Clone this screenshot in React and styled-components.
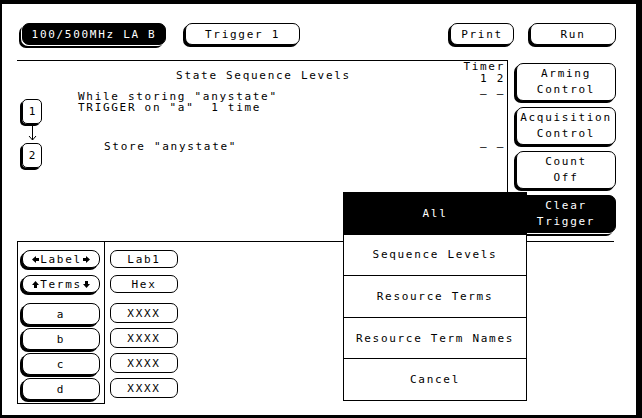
import React from 'react';
import styled, { createGlobalStyle } from 'styled-components';

const Global = createGlobalStyle`
  html, body { margin: 0; padding: 0; background: #000; }
  body { font-family: "DejaVu Sans Mono", "Liberation Mono", monospace; }
`;

const Frame = styled.div`
  width: 642px;
  height: 418px;
  box-sizing: border-box;
  background: #000;
  padding: 4px 6px 3px 2px;
`;

const Screen = styled.div`
  position: relative;
  width: 100%;
  height: 100%;
  box-sizing: border-box;
  background: #fff;
  color: #000;
  font-size: 11px;
  letter-spacing: 1.7px;
  line-height: 11px;
  padding: 19px 20px 0 15px;
  display: flex;
  flex-direction: column;
`;

const TopBar = styled.div`
  display: flex;
  align-items: center;
  height: 22px;
`;

const Spacer = styled.div`
  flex: 1;
`;

const Btn = styled.div`
  box-sizing: border-box;
  display: flex;
  flex-direction: column;
  align-items: center;
  justify-content: center;
  flex: none;
  width: ${p => p.$w}px;
  height: ${p => p.$h}px;
  margin-left: ${p => p.$ml || 0}px;
  border: 1px solid #000;
  border-radius: ${p => p.$r || 7}px;
  background: ${p => (p.$dark ? '#000' : '#fff')};
  color: ${p => (p.$dark ? '#fff' : '#000')};
  box-shadow: ${p => (p.$dark ? '-1px 1px 0 #fff, -3px 3px 0 #000' : p.$flat ? 'none' : '-2px 2px 0 #000')};
  line-height: ${p => p.$lh || 11}px;
  white-space: pre;
  text-align: center;
`;

const Mid = styled.div`
  display: flex;
  margin-top: 15px;
  height: 181px;
`;

const Panel = styled.div`
  width: 492px;
  box-sizing: border-box;
  border-top: 1px solid #000;
  border-right: 1px solid #000;
  padding: 0 2px 0 5px;
  display: grid;
  grid-template-columns: 1fr auto;
  grid-template-rows: auto 1fr;
`;

const Title = styled.div`
  grid-column: 1 / -1;
  grid-row: 1;
  justify-self: center;
  margin-top: 9px;
`;

const TimerCol = styled.div`
  grid-column: 2;
  grid-row: 1 / span 2;
  display: flex;
  flex-direction: column;
  align-items: flex-end;
  margin-top: 0;
  line-height: 12px;
`;

const TimerLine = styled.div`
  margin-top: ${p => p.$mt || 0}px;
  white-space: pre;
`;

const Flow = styled.div`
  grid-column: 1;
  grid-row: 2;
  display: flex;
  flex-direction: column;
  margin-top: 10px;
`;

const Level = styled.div`
  display: flex;
  align-items: flex-start;
`;

const LevelBox = styled.div`
  box-sizing: border-box;
  width: 20px;
  height: 25px;
  margin-top: ${p => p.$mt || 0}px;
  border: 1px solid #000;
  border-radius: 5px;
  box-shadow: -2px 2px 0 #000;
  display: flex;
  align-items: center;
  justify-content: center;
  letter-spacing: 0;
`;

const LevelText = styled.div`
  margin-left: ${p => p.$ml}px;
  white-space: pre;
`;

const Connector = styled.svg`
  display: block;
  margin-left: 5px;
`;

const RightCol = styled.div`
  display: flex;
  flex-direction: column;
  gap: 6px;
  padding: 3px 0 0 8px;
`;

const Bottom = styled.div`
  display: flex;
  width: 597px;
  border-top: 1px solid #000;
`;

const LeftBox = styled.div`
  box-sizing: border-box;
  width: 88px;
  height: 162px;
  border: 1px solid #000;
  border-top: none;
  padding: 8px 0 0 4px;
  display: flex;
  flex-direction: column;
`;

const ValueCol = styled.div`
  display: flex;
  flex-direction: column;
  padding: 8px 0 0 5px;
`;

const Group = styled.div`
  display: flex;
  flex-direction: column;
  gap: ${p => p.$gap}px;
  margin-top: ${p => p.$mt || 0}px;
`;

const Menu = styled.div`
  position: absolute;
  left: 341px;
  top: 188px;
  width: 184px;
  height: 209px;
  box-sizing: border-box;
  border: 1px solid #000;
  background: #fff;
  display: flex;
  flex-direction: column;
`;

const MenuItem = styled.div`
  flex: 1;
  display: flex;
  align-items: center;
  justify-content: center;
  background: ${p => (p.$active ? '#000' : '#fff')};
  color: ${p => (p.$active ? '#fff' : '#000')};
  border-top: ${p => (p.$first ? 'none' : '1px solid #000')};
`;

const Glyph = styled.svg`
  display: block;
  margin: 0 1px;
`;

const Row = styled.span`
  display: flex;
  align-items: center;
`;

function Arrow({ dir }) {
  const pts = {
    left: '0,3.5 4,0 4,2 7,2 7,5 4,5 4,7',
    right: '7,3.5 3,0 3,2 0,2 0,5 3,5 3,7',
    up: '3.5,0 7,4 5,4 5,7 2,7 2,4 0,4',
    down: '3.5,7 7,3 5,3 5,0 2,0 2,3 0,3',
  }[dir];
  return (
    <Glyph width="7" height="7" viewBox="0 0 7 7">
      <polygon points={pts} fill="#000" />
    </Glyph>
  );
}

export default function App() {
  return (
    <>
      <Global />
      <Frame>
        <Screen>
          <TopBar>
            <Btn $dark $w={144} $h={22} $ml={5}>100/500MHz LA B</Btn>
            <Btn $w={115} $h={22} $ml={19}>Trigger 1</Btn>
            <Spacer />
            <Btn $w={64} $h={22}>Print</Btn>
            <Btn $w={86} $h={22} $ml={16}>Run</Btn>
          </TopBar>

          <Mid>
            <Panel>
              <Title>State Sequence Levels</Title>
              <TimerCol>
                <TimerLine>Timer</TimerLine>
                <TimerLine>1 2</TimerLine>
                <TimerLine $mt={3}>– –</TimerLine>
                <TimerLine $mt={41}>– –</TimerLine>
              </TimerCol>
              <Flow>
                <Level>
                  <LevelBox $mt={8}>1</LevelBox>
                  <LevelText $ml={36}>{'While storing "anystate"\nTRIGGER on "a"  1 time'}</LevelText>
                </Level>
                <Connector width="10" height="17" viewBox="0 0 10 17">
                  <line x1="5.5" y1="0" x2="5.5" y2="16" stroke="#000" strokeWidth="1" />
                  <polyline points="2,12 5.5,16 9,12" fill="none" stroke="#000" strokeWidth="1" />
                </Connector>
                <Level>
                  <LevelBox $mt={2}>2</LevelBox>
                  <LevelText $ml={62}>{'Store "anystate"'}</LevelText>
                </Level>
              </Flow>
            </Panel>
            <RightCol>
              <Btn $w={100} $h={38} $lh={16}>{'Arming\nControl'}</Btn>
              <Btn $w={100} $h={38} $lh={16}>{'Acquisition\nControl'}</Btn>
              <Btn $w={100} $h={38} $lh={16}>{'Count\nOff'}</Btn>
              <Btn $dark $w={100} $h={38} $lh={16}>{'Clear\nTrigger'}</Btn>
            </RightCol>
          </Mid>

          <Bottom>
            <LeftBox>
              <Group $gap={7}>
                <Btn $w={78} $h={18} $r={8}>
                  <Row><Arrow dir="left" />Label<Arrow dir="right" /></Row>
                </Btn>
                <Btn $w={78} $h={18} $r={8}>
                  <Row><Arrow dir="up" />Terms<Arrow dir="down" /></Row>
                </Btn>
              </Group>
              <Group $gap={3} $mt={10}>
                <Btn $w={78} $h={22} $r={8}>a</Btn>
                <Btn $w={78} $h={22} $r={8}>b</Btn>
                <Btn $w={78} $h={22} $r={8}>c</Btn>
                <Btn $w={78} $h={22} $r={8}>d</Btn>
              </Group>
            </LeftBox>
            <ValueCol>
              <Group $gap={7}>
                <Btn $flat $w={68} $h={18} $r={7}>Lab1</Btn>
                <Btn $flat $w={68} $h={18} $r={7}>Hex</Btn>
              </Group>
              <Group $gap={5} $mt={10}>
                <Btn $flat $w={68} $h={20} $r={7}>XXXX</Btn>
                <Btn $flat $w={68} $h={20} $r={7}>XXXX</Btn>
                <Btn $flat $w={68} $h={20} $r={7}>XXXX</Btn>
                <Btn $flat $w={68} $h={20} $r={7}>XXXX</Btn>
              </Group>
            </ValueCol>
          </Bottom>

          <Menu>
            <MenuItem $active $first>All</MenuItem>
            <MenuItem>Sequence Levels</MenuItem>
            <MenuItem>Resource Terms</MenuItem>
            <MenuItem>Resource Term Names</MenuItem>
            <MenuItem>Cancel</MenuItem>
          </Menu>
        </Screen>
      </Frame>
    </>
  );
}
